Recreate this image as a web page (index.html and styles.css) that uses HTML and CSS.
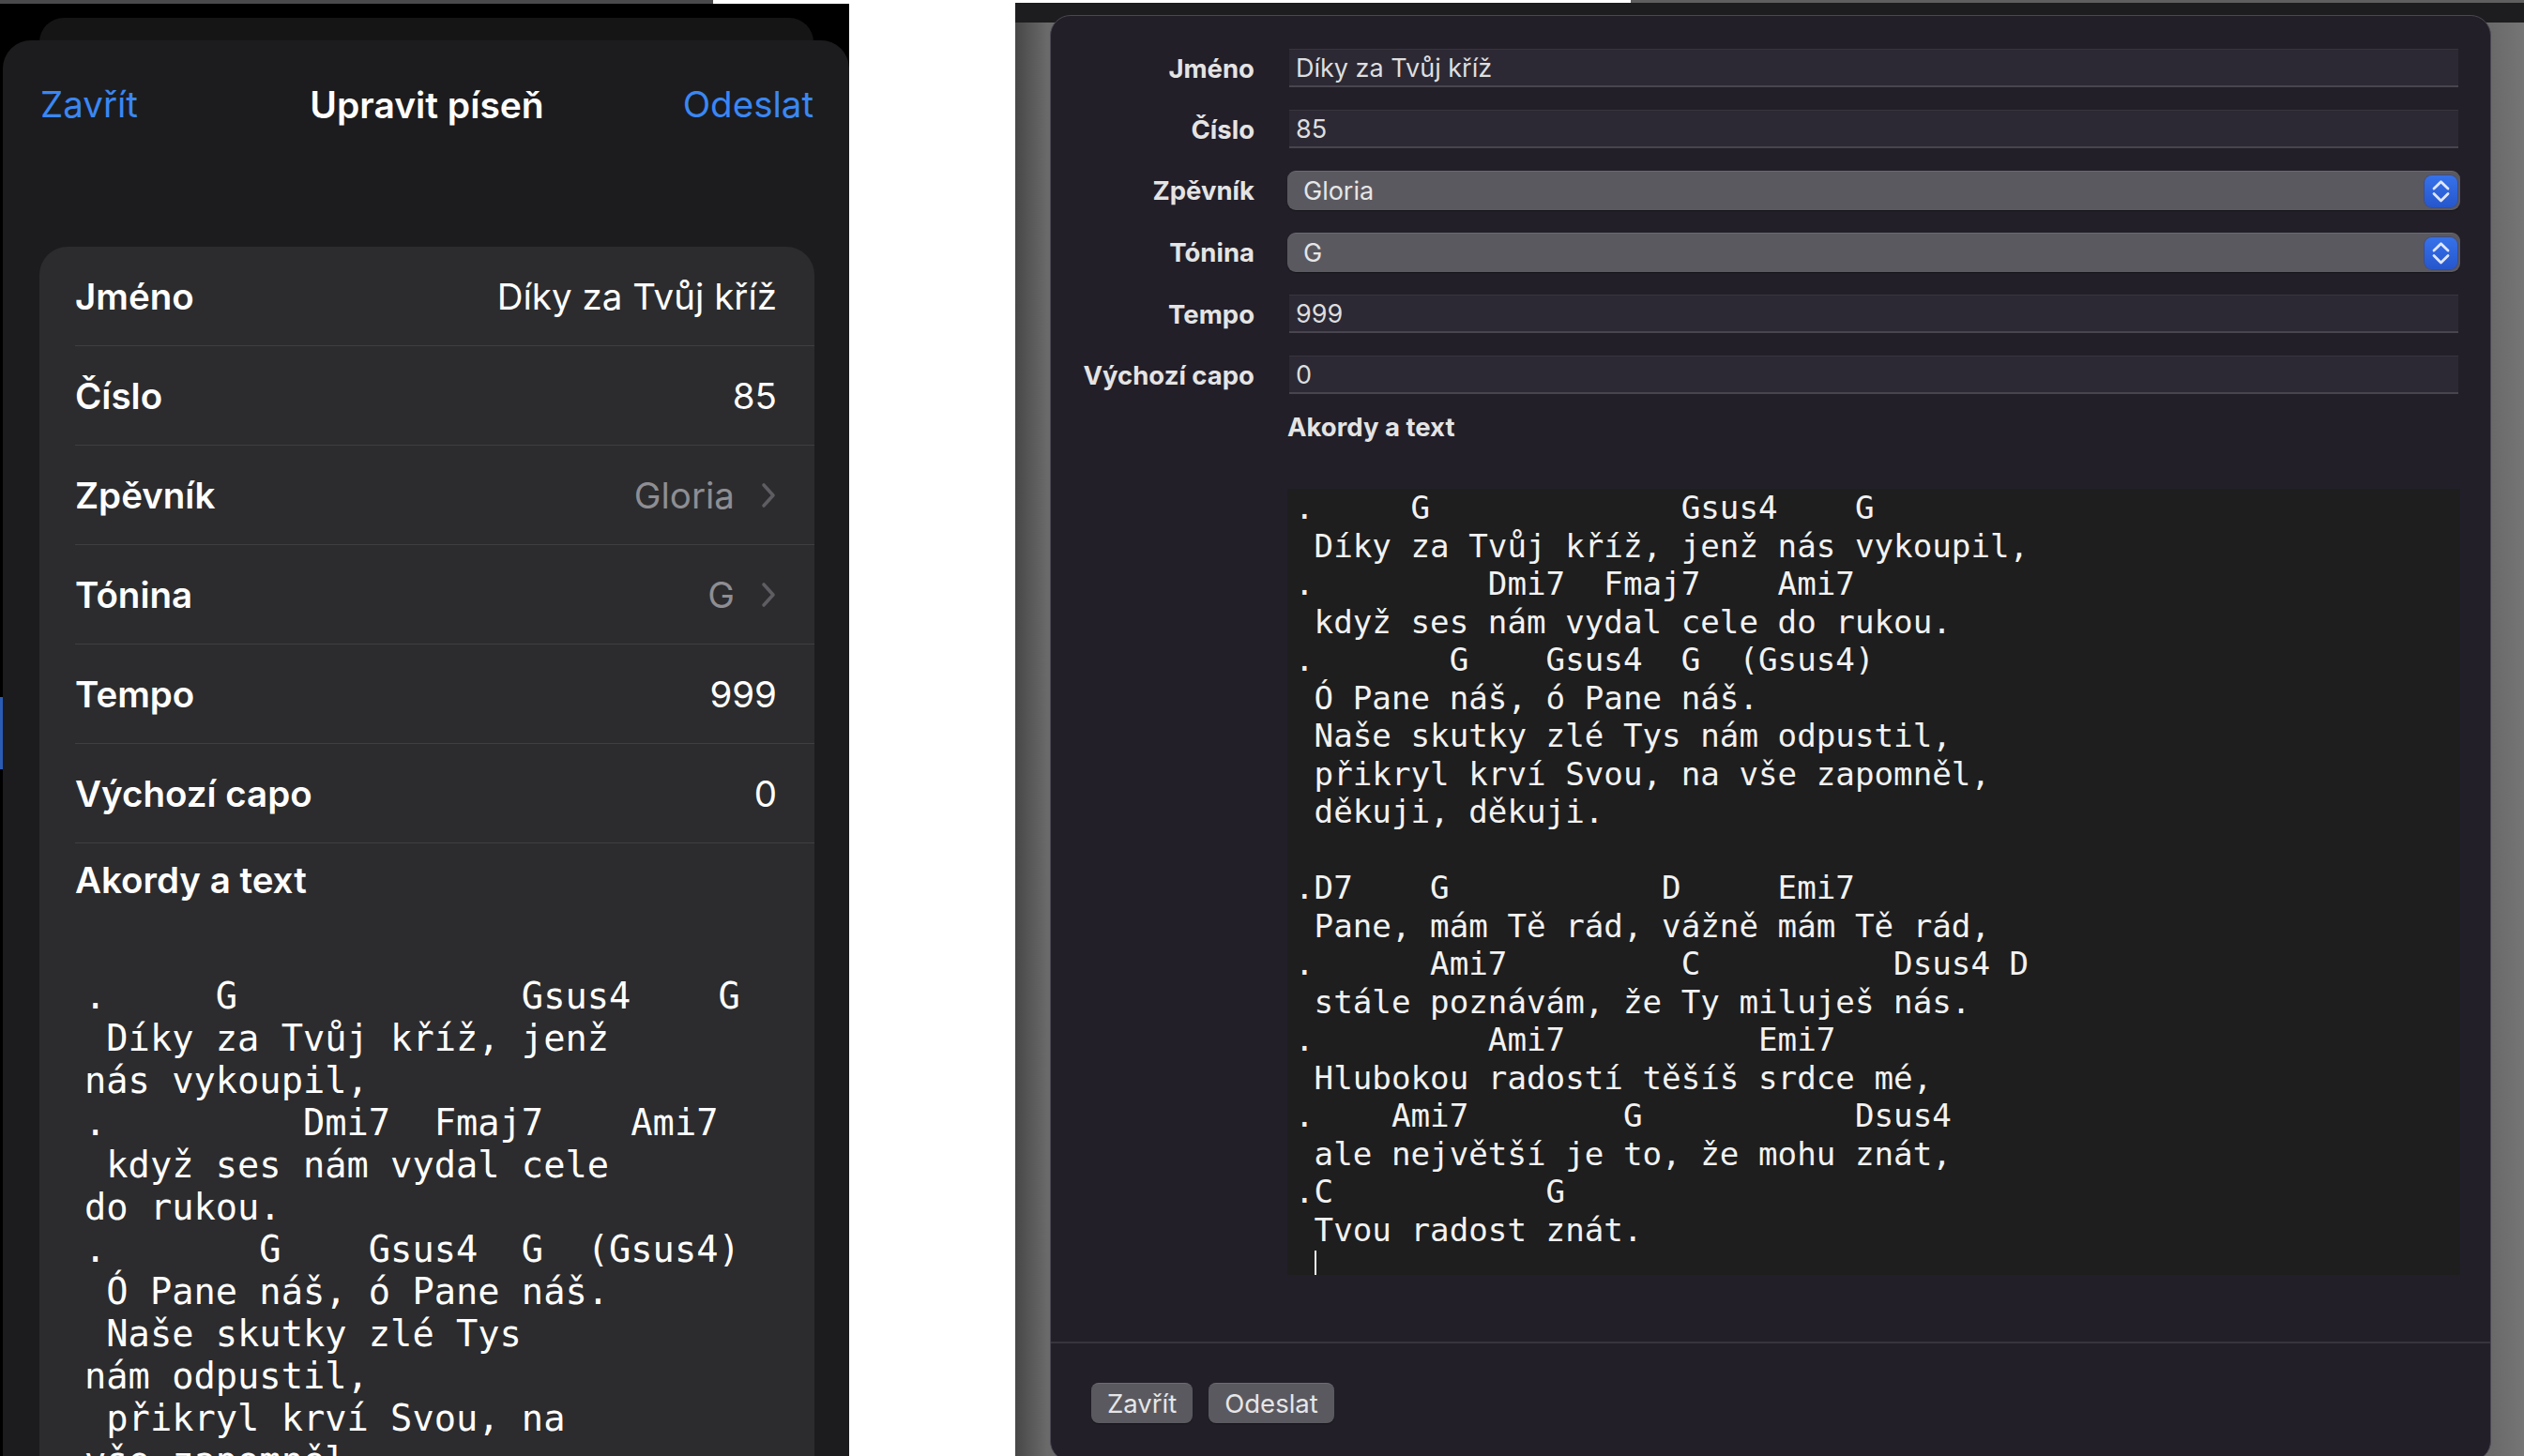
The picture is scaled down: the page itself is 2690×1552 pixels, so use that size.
FILE: index.html
```html
<!DOCTYPE html>
<html lang="cs">
<head>
<meta charset="utf-8">
<title>Upravit píseň</title>
<link rel="stylesheet" href="styles.css">
</head>
<body>
<section class="ios">
  <div class="ios-top"><span class="seg-gray"></span><span class="seg-white"></span></div>
  <div class="backsheet"></div>
  <div class="sheet">
    <header class="nav">
      <span class="nav-btn left">Zavřít</span>
      <span class="nav-title">Upravit píseň</span>
      <span class="nav-btn right">Odeslat</span>
    </header>
    <div class="card">
      <div class="row"><span class="row-label">Jméno</span><span class="row-value">Díky za Tvůj kříž</span></div>
      <div class="row"><span class="row-label">Číslo</span><span class="row-value">85</span></div>
      <div class="row"><span class="row-label">Zpěvník</span><span class="row-value muted">Gloria<svg class="chev" viewBox="0 0 18 30" width="18" height="30"><path d="M4 4 L14 15 L4 26" fill="none" stroke="#5d5d62" stroke-width="3.6" stroke-linecap="round" stroke-linejoin="round"/></svg></span></div>
      <div class="row"><span class="row-label">Tónina</span><span class="row-value muted">G<svg class="chev" viewBox="0 0 18 30" width="18" height="30"><path d="M4 4 L14 15 L4 26" fill="none" stroke="#5d5d62" stroke-width="3.6" stroke-linecap="round" stroke-linejoin="round"/></svg></span></div>
      <div class="row"><span class="row-label">Tempo</span><span class="row-value">999</span></div>
      <div class="row"><span class="row-label">Výchozí capo</span><span class="row-value">0</span></div>
      <div class="section-head">Akordy a text</div>
<pre class="ios-mono">.     G             Gsus4    G
 Díky za Tvůj kříž, jenž
nás vykoupil,
.         Dmi7  Fmaj7    Ami7
 když ses nám vydal cele
do rukou.
.       G    Gsus4  G  (Gsus4)
 Ó Pane náš, ó Pane náš.
 Naše skutky zlé Tys
nám odpustil,
 přikryl krví Svou, na
vše zapomněl,</pre>
    </div>
  </div>
  <span class="edge-mark"></span>
</section>

<div class="gap"></div>

<section class="mac">
  <div class="mac-top"><span class="seg-white"></span><span class="seg-gray"></span></div>
  <div class="desk">
    <div class="window">
      <div class="form">
        <label class="f-label">Jméno</label>
        <div class="field">Díky za Tvůj kříž</div>
        <label class="f-label">Číslo</label>
        <div class="field">85</div>
        <label class="f-label">Zpěvník</label>
        <div class="popup"><span>Gloria</span><svg class="stepper" viewBox="0 0 35 34" width="35" height="34"><path d="M10 14 L17.5 6.8 L25 14" fill="none" stroke="#dfe6fb" stroke-width="2.8" stroke-linecap="round" stroke-linejoin="round"/><path d="M10 19.5 L17.5 27 L25 19.5" fill="none" stroke="#dfe6fb" stroke-width="2.8" stroke-linecap="round" stroke-linejoin="round"/></svg></div>
        <label class="f-label">Tónina</label>
        <div class="popup"><span>G</span><svg class="stepper" viewBox="0 0 35 34" width="35" height="34"><path d="M10 14 L17.5 6.8 L25 14" fill="none" stroke="#dfe6fb" stroke-width="2.8" stroke-linecap="round" stroke-linejoin="round"/><path d="M10 19.5 L17.5 27 L25 19.5" fill="none" stroke="#dfe6fb" stroke-width="2.8" stroke-linecap="round" stroke-linejoin="round"/></svg></div>
        <label class="f-label">Tempo</label>
        <div class="field">999</div>
        <label class="f-label">Výchozí capo</label>
        <div class="field">0</div>
        <div class="chords-label">Akordy a text</div>
<pre class="mac-mono">.     G             Gsus4    G
 Díky za Tvůj kříž, jenž nás vykoupil,
.         Dmi7  Fmaj7    Ami7
 když ses nám vydal cele do rukou.
.       G    Gsus4  G  (Gsus4)
 Ó Pane náš, ó Pane náš.
 Naše skutky zlé Tys nám odpustil,
 přikryl krví Svou, na vše zapomněl,
 děkuji, děkuji.

.D7    G           D     Emi7
 Pane, mám Tě rád, vážně mám Tě rád,
.      Ami7         C          Dsus4 D
 stále poznávám, že Ty miluješ nás.
.         Ami7          Emi7
 Hlubokou radostí těšíš srdce mé,
.    Ami7        G           Dsus4
 ale největší je to, že mohu znát,
.C           G
 Tvou radost znát.
 <span class="caret"></span></pre>
      </div>
      <footer class="footer">
        <button class="btn">Zavřít</button>
        <button class="btn">Odeslat</button>
      </footer>
    </div>
  </div>
</section>
</body>
</html>
```
FILE: styles.css
```css
* { box-sizing: border-box; margin: 0; padding: 0; }

html, body {
  width: 2690px;
  height: 1552px;
  overflow: hidden;
  background: #ffffff;
}

body {
  display: flex;
  font-family: Inter, "Noto Sans", sans-serif;
}

/* ---------- iOS panel ---------- */
.ios {
  position: relative;
  flex: none;
  width: 905px;
  height: 1552px;
  background: #000;
  display: flex;
  flex-direction: column;
  overflow: hidden;
}

.ios-top {
  flex: none;
  height: 4px;
  display: flex;
}
.ios-top .seg-gray { width: 760px; background: #4a4a4c; }
.ios-top .seg-white { flex: 1; background: #fff; }

.backsheet {
  flex: none;
  height: 40px;
  margin: 15px 38px 0 42px;
  background: #151516;
  border-radius: 26px 26px 0 0;
}

.sheet {
  flex: 1;
  margin: -16px 0 0 3px;
  background: #1c1c1e;
  border-radius: 30px 30px 0 0;
  display: flex;
  flex-direction: column;
}

.nav {
  flex: none;
  height: 136px;
  padding: 0 38px 0 40px;
  display: grid;
  grid-template-columns: 1fr auto 1fr;
  align-items: center;
  font-size: 38.5px;
}
.nav-btn { color: #3a87f4; }
.nav-btn.right { justify-self: end; }
.nav-title { color: #fff; font-weight: 600; font-size: 39px; }

.card {
  flex: 1;
  margin: 84px 37px 0 39px;
  background: #2c2c2e;
  border-radius: 30px 30px 0 0;
  color: #fff;
  font-size: 38.5px;
}

.row {
  height: 106px;
  margin-left: 38px;
  padding-right: 40px;
  border-bottom: 1px solid #3f3f42;
  display: flex;
  align-items: center;
  justify-content: space-between;
}
.row-label { font-weight: 600; }
.row-value { display: flex; align-items: center; gap: 27px; }
.row-value.muted { color: #8e8e93; }
.chev { display: block; }

.section-head {
  height: 78px;
  margin-left: 38px;
  display: flex;
  align-items: center;
  font-weight: 600;
}

.ios-mono {
  margin-top: 62px;
  padding-left: 48px;
  font-family: "DejaVu Sans Mono", "Liberation Mono", monospace;
  font-size: 38.7px;
  line-height: 45px;
  color: #fff;
  white-space: pre;
}

.edge-mark {
  position: absolute;
  left: 0;
  top: 743px;
  width: 3px;
  height: 77px;
  background: #2a5bb5;
}

/* ---------- gap ---------- */
.gap {
  flex: none;
  width: 177px;
  background: #fff;
}

/* ---------- macOS panel ---------- */
.mac {
  flex: 1;
  height: 1552px;
  display: flex;
  flex-direction: column;
  overflow: hidden;
}

.mac-top {
  flex: none;
  height: 3px;
  display: flex;
}
.mac-top .seg-white { width: 656px; background: #fff; }
.mac-top .seg-gray { flex: 1; background: #5f5f5f; }

.desk {
  flex: 1;
  padding: 13px 0 0 37px;
  background:
    linear-gradient(#1d1d1f, #1d1d1f) top left / 100% 21px no-repeat,
    linear-gradient(to right, #474747 0, #6a6a6a 34px, #606060 50%, #6a6a6a calc(100% - 34px), #757575 100%);
}

.window {
  width: 1536px;
  height: 1542px;
  background: #221f29;
  border: 1px solid #4b4852;
  border-radius: 22px;
  display: flex;
  flex-direction: column;
  overflow: hidden;
  color: #e0e0e0;
}

.form {
  padding: 35px 34px 0 0;
  display: grid;
  grid-template-columns: 217px 1fr;
  column-gap: 37px;
  row-gap: 24px;
  align-items: center;
}

.f-label {
  text-align: right;
  font-weight: 700;
  font-size: 27.5px;
  color: #e4e4e4;
}

.field {
  height: 41px;
  padding-left: 7px;
  display: flex;
  align-items: center;
  background: #2c2934;
  border-top: 1px solid #38353f;
  border-bottom: 2px solid #48454f;
  font-size: 27px;
  color: #dedede;
}

.popup {
  height: 42px;
  margin: 0 -2px;
  padding: 0 3px 0 17px;
  display: flex;
  align-items: center;
  justify-content: space-between;
  background: #5b5960;
  border-top: 1px solid #6b6970;
  border-radius: 9px;
  box-shadow: 0 1px 1px rgba(0, 0, 0, 0.35);
  font-size: 27px;
  color: #e6e6e6;
}

.stepper {
  display: block;
  border-radius: 8px;
  background: linear-gradient(#3672ea, #2656cc);
  box-shadow: 0 0 0 1px rgba(40, 70, 160, 0.6);
}

.chords-label {
  grid-column: 2;
  margin-left: -2px;
  margin-top: -2px;
  font-weight: 700;
  font-size: 27.5px;
  line-height: 26px;
  color: #e4e4e4;
}

.mac-mono {
  grid-column: 2;
  height: 838px;
  margin: 29px -2px 0;
  padding: 0 8px;
  overflow: hidden;
  background: #1e1e1e;
  font-family: "DejaVu Sans Mono", "Liberation Mono", monospace;
  font-size: 34.2px;
  line-height: 40.5px;
  color: #f2f2f2;
  white-space: pre;
}

.caret {
  display: inline-block;
  width: 2px;
  height: 38px;
  background: #f2f2f2;
  vertical-align: -8px;
}

.footer {
  flex: 1;
  margin-top: 71px;
  padding: 42px 0 0 43px;
  border-top: 2px solid #37343e;
  display: flex;
  align-items: flex-start;
  gap: 17px;
}

.btn {
  height: 43px;
  padding: 0 17px;
  font-family: Inter, "Noto Sans", sans-serif;
  font-size: 27.5px;
  color: #e6e6e6;
  background: #5b5960;
  border: none;
  border-top: 1px solid #6e6c73;
  border-radius: 8px;
  box-shadow: 0 1px 1px rgba(0, 0, 0, 0.35);
}
```
